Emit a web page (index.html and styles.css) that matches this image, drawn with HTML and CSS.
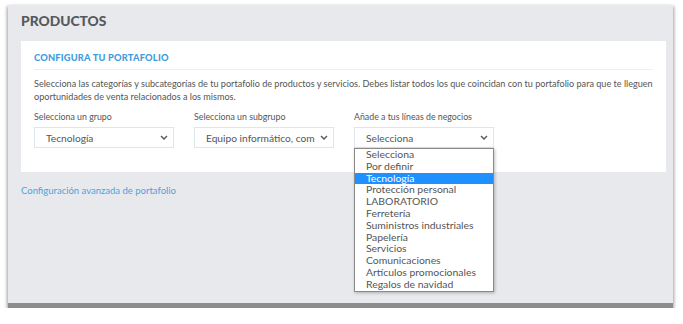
FILE: index.html
```html
<!DOCTYPE html>
<html lang="es">
<head>
  <meta charset="UTF-8" />
  <meta name="viewport" content="width=device-width, initial-scale=1.0" />
  <title>Productos</title>
  <link rel="stylesheet" href="styles.css">
</head>
<body>
  <section class="panel">
    <h1 class="panel-title">PRODUCTOS</h1>

    <div class="card">
      <h2 class="card-title">CONFIGURA TU PORTAFOLIO</h2>
      <p class="intro">
        Selecciona las categorías y subcategorías de tu portafolio de productos y servicios. Debes listar todos los que coincidan con tu portafolio para que te lleguen
        oportunidades de venta relacionados a los mismos.
      </p>

      <div class="fields">
        <div class="field">
          <label>Selecciona un grupo</label>
          <div class="select">
            <span>Tecnología</span>
            <svg class="chev" viewBox="0 0 8 5" width="8" height="5"><path d="M1 1l3 3 3-3" fill="none" stroke="#555" stroke-width="1.4"/></svg>
          </div>
        </div>
        <div class="field">
          <label>Selecciona un subgrupo</label>
          <div class="select">
            <span>Equipo informático, com</span>
            <svg class="chev" viewBox="0 0 8 5" width="8" height="5"><path d="M1 1l3 3 3-3" fill="none" stroke="#555" stroke-width="1.4"/></svg>
          </div>
        </div>
        <div class="field">
          <label>Añade a tus líneas de negocios</label>
          <div class="select-wrap">
            <div class="select">
              <span>Selecciona</span>
              <svg class="chev" viewBox="0 0 8 5" width="8" height="5"><path d="M1 1l3 3 3-3" fill="none" stroke="#555" stroke-width="1.4"/></svg>
            </div>
            <ul class="options">
              <li>Selecciona</li>
              <li>Por definir</li>
              <li class="active">Tecnología</li>
              <li>Protección personal</li>
              <li>LABORATORIO</li>
              <li>Ferretería</li>
              <li>Suministros industriales</li>
              <li>Papelería</li>
              <li>Servicios</li>
              <li>Comunicaciones</li>
              <li>Artículos promocionales</li>
              <li>Regalos de navidad</li>
            </ul>
          </div>
        </div>
      </div>
    </div>

    <a class="advanced" href="#">Configuración avanzada de portafolio</a>
  </section>
</body>
</html>
```

FILE: styles.css
```css
body {
  margin: 0;
  background-color: #fff;
  font-family: Lato, "Open Sans", Arial, sans-serif;
  color: #555;
}

.panel {
  margin: 5px 10px 0 8px;
  height: 303px;
  box-sizing: border-box;
  background-color: #e8e9ec;
  padding: 0 7px 0 13px;
  border-bottom: 5px solid #8c8c8c;
  box-shadow: 0 2px 3px rgba(0,0,0,0.3), -2px 1px 3px rgba(0,0,0,0.15), 2px 1px 3px rgba(0,0,0,0.15);
}

.panel-title {
  margin: 0;
  height: 36px;
  line-height: 32px;
  font-size: 13.8px;
  font-weight: 900;
  color: #55585e;
}

.card {
  background-color: #fff;
  padding: 11px 13px 24px;
}

.card-title {
  margin: 0;
  font-size: 9.3px;
  font-weight: 900;
  color: #3f9ddf;
  letter-spacing: 0.2px;
  padding-bottom: 6px;
  border-bottom: 1px solid #eceef0;
}

.intro {
  margin: 8px 0 8px;
  font-size: 9.1px;
  line-height: 12.5px;
  color: #555;
}

.fields {
  display: flex;
  gap: 20px;
}

.field {
  width: 140px;
}

.field label {
  display: block;
  font-size: 8.8px;
  margin-bottom: 5px;
  color: #555;
}

.select-wrap {
  position: relative;
}

.select {
  display: flex;
  align-items: center;
  justify-content: space-between;
  height: 21px;
  box-sizing: border-box;
  border: 1px solid #dfe5ec;
  padding: 0 5px 0 11px;
  font-size: 10.2px;
  color: #555;
  white-space: nowrap;
  overflow: hidden;
}

.select span {
  overflow: hidden;
}

.chev {
  flex-shrink: 0;
  margin-left: 4px;
}

.options {
  position: absolute;
  top: 100%;
  left: 0;
  width: 140px;
  box-sizing: border-box;
  margin: 0;
  padding: 0;
  list-style: none;
  background-color: #fff;
  border: 1px solid #8a8a8a;
  box-shadow: 1px 1px 3px rgba(0,0,0,0.25);
  z-index: 2;
}

.options li {
  height: 11.8px;
  line-height: 11.8px;
  padding-left: 11px;
  font-size: 10.4px;
  color: #555;
}

.options li.active {
  background-color: #1e90ff;
  color: #fff;
}

.advanced {
  display: block;
  margin-top: 13px;
  font-size: 9.5px;
  color: #4aa3df;
  text-decoration: none;
}
```
